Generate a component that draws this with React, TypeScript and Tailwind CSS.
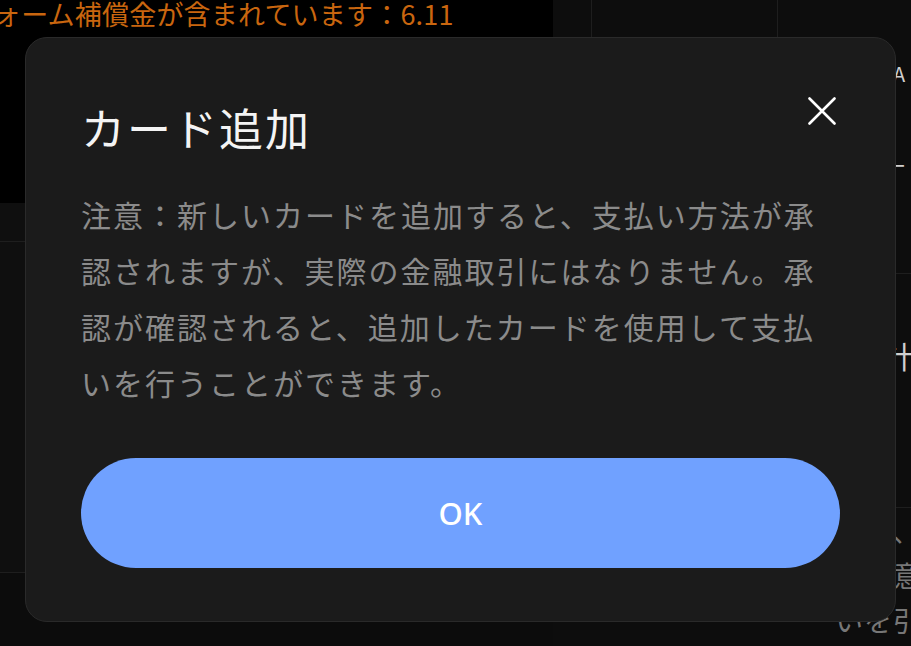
const jp = { fontFamily: '"Noto Sans CJK JP", "Noto Sans", sans-serif' };

const CloseIcon = () => (
  <svg width="28" height="28" viewBox="0 0 28 28" fill="none">
    <path d="M1.5 1.5 L26.5 26.5 M26.5 1.5 L1.5 26.5" stroke="#ffffff" strokeWidth="2.6" strokeLinecap="round" />
  </svg>
);

export default function App() {
  return (
    <div className="relative h-[646px] w-full overflow-hidden bg-[#0d0d0d]" style={jp}>
      {/* page behind the dialog */}
      <div className="flex h-full">
        <div className="flex w-[553px] shrink-0 flex-col">
          <div className="h-[203px] bg-black">
            <p className="-ml-[6px] whitespace-nowrap text-[27px] leading-[27px] tracking-[0.2px] text-[#c9660f]">
              ォーム補償金が含まれています：6.11
            </p>
          </div>
          <div className="flex flex-1 flex-col bg-[#0f0f0f]">
            <div className="h-[39px] border-b border-[#1e1e1e]" />
            <div className="h-[331px] border-b border-[#1e1e1e]" />
            <div className="flex-1 bg-[#0c0c0c]" />
          </div>
        </div>
        <div className="flex min-w-0 flex-1 flex-col overflow-hidden bg-[#0d0d0d]">
          <div className="flex h-[274px] border-b border-[#1e1e1e]">
            <div className="w-[38px] shrink-0" />
            <div className="w-[186px] shrink-0 border-l border-[#1e1e1e]" />
            <div className="flex-1 border-l border-[#1e1e1e] pl-[115px] pt-[64px] text-[20px] leading-[20px] text-[#cfcfcf]">
              <div>A</div>
              <div className="-ml-[7px] mt-[72px]">ー</div>
            </div>
          </div>
          <div className="h-[234px] whitespace-nowrap border-b border-[#1e1e1e] pl-[300px] pt-[66px] text-[30px] leading-[30px] text-[#cfcfcf]">
            合計工
          </div>
          <div className="flex-1 whitespace-nowrap pl-[282px] text-[28px] leading-[45px] tracking-[1px] text-[#777777]">
            <div>すと、</div>
            <div>。注意</div>
            <div>いを引</div>
          </div>
        </div>
      </div>

      {/* dialog */}
      <div className="absolute left-[25px] top-[37px] w-[871px] rounded-[22px] border border-[#2a2a2a] bg-[#1b1b1b] px-[55px] pt-[67px] pb-[53px]">
        <button className="absolute right-[59px] top-[59px]">
          <CloseIcon />
        </button>
        <h2 className="text-[44px] leading-[44px] tracking-[2px] text-[#f4f4f4]">カード追加</h2>
        <p className="mt-[37px] text-[30px] leading-[56px] tracking-[2px] text-[#8b8b8b]">
          注意：新しいカードを追加すると、支払い方法が承認されますが、実際の金融取引にはなりません。承認が確認されると、追加したカードを使用して支払いを行うことができます。
        </p>
        <button
          className="mt-[48px] flex h-[110px] w-full items-center justify-center rounded-full bg-[#70a1ff] text-[31px] font-medium text-white"
          style={{ fontFamily: '"Noto Sans", sans-serif' }}
        >
          OK
        </button>
      </div>
    </div>
  );
}
